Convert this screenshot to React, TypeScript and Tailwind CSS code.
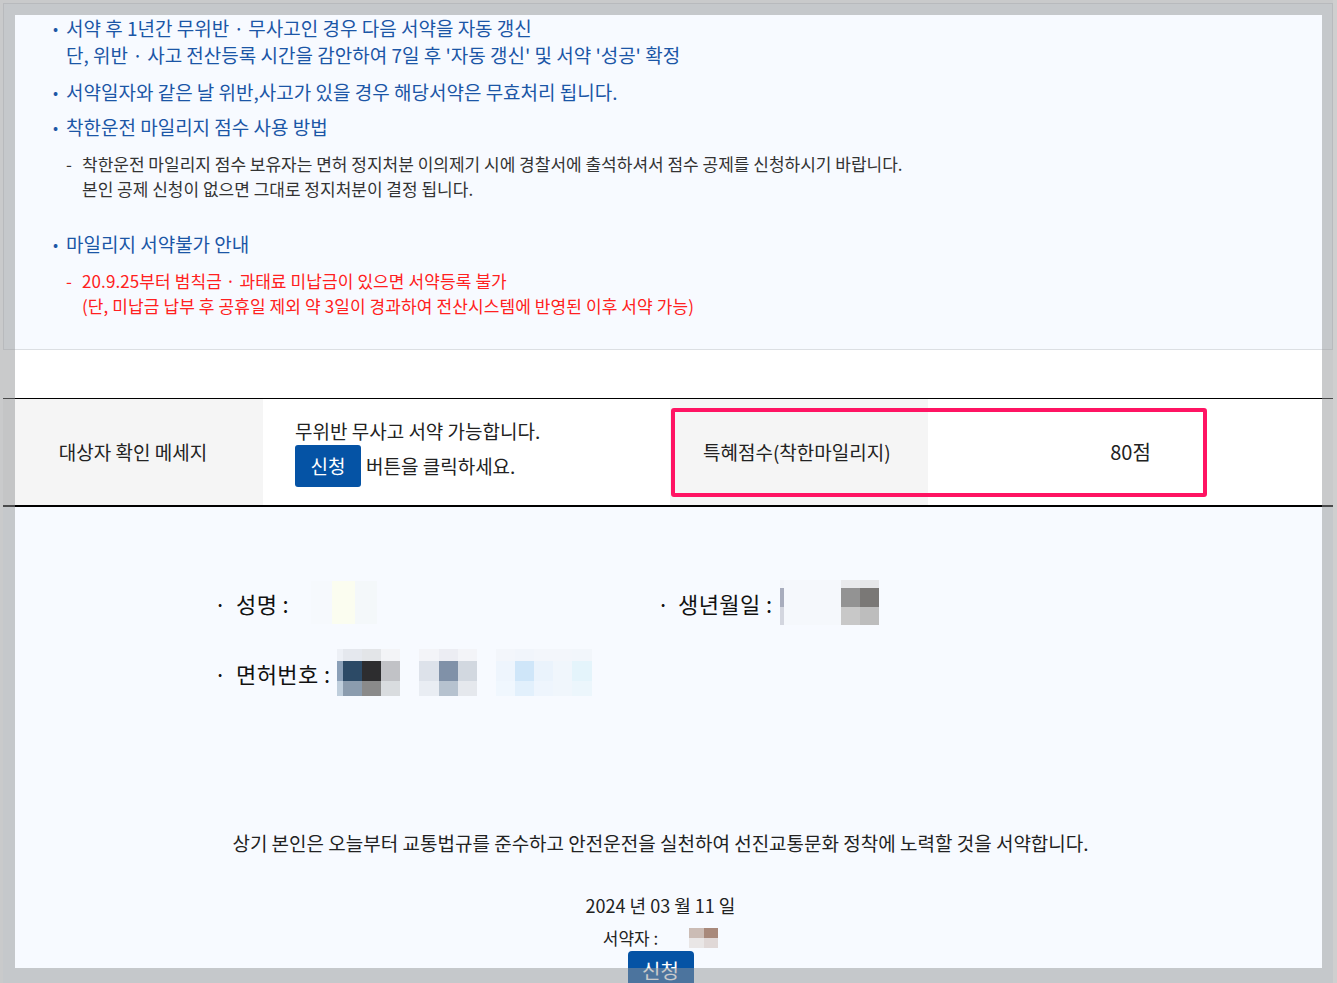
import React from "react";

const font = { fontFamily: '"Noto Sans CJK KR", "Noto Sans", sans-serif' };

type Tile = { w: number; c: string[] };

// blurred (pixelated) personal data
function Mosaic({ cols, rows }: { cols: Tile[]; rows: number[] }) {
  return (
    <div className="flex">
      {cols.map((col, i) => (
        <div key={i} className="flex flex-col" style={{ width: col.w }}>
          {rows.map((h, j) => (
            <div key={j} style={{ height: h, background: col.c[j] }} />
          ))}
        </div>
      ))}
    </div>
  );
}

function Bullet({ children, className = "" }: { children: React.ReactNode; className?: string }) {
  return (
    <div className={"flex " + className}>
      <span className="w-[13px] shrink-0 text-[15px]">•</span>
      <div>{children}</div>
    </div>
  );
}

export default function App() {
  return (
    <div
      className="relative h-[983px] w-[1337px] overflow-hidden bg-white text-[#222]"
      style={font}
    >
      {/* notice box */}
      <div className="ml-[3px] mr-[4px] mt-[3px] border border-[#dcdfe3] bg-[#f7faff] pb-[31px] pl-[49px] pt-[10px]">
        <div className="text-[19px] leading-[27px] text-[#1b56a6]">
          <Bullet>
            <div>서약 후 1년간 무위반 · 무사고인 경우 다음 서약을 자동 갱신</div>
            <div>단, 위반 · 사고 전산등록 시간을 감안하여 7일 후 '자동 갱신' 및 서약 '성공' 확정</div>
          </Bullet>
          <Bullet className="mt-[10px]">서약일자와 같은 날 위반,사고가 있을 경우 해당서약은 무효처리 됩니다.</Bullet>
          <Bullet className="mt-[8px]">착한운전 마일리지 점수 사용 방법</Bullet>
        </div>
        <div className="mt-[11px] flex pl-[13px] text-[17px] leading-[25px] text-[#333]">
          <span className="w-[16px] shrink-0">-</span>
          <div>
            <div>착한운전 마일리지 점수 보유자는 면허 정지처분 이의제기 시에 경찰서에 출석하셔서 점수 공제를 신청하시기 바랍니다.</div>
            <div>본인 공제 신청이 없으면 그대로 정지처분이 결정 됩니다.</div>
          </div>
        </div>
        <div className="mt-[29px] text-[19px] leading-[27px] text-[#1b56a6]">
          <Bullet>마일리지 서약불가 안내</Bullet>
        </div>
        <div className="mt-[11px] flex pl-[13px] text-[17px] leading-[25px] tracking-[0.1px] text-[#ff2020]">
          <span className="w-[16px] shrink-0">-</span>
          <div>
            <div>20.9.25부터 범칙금 · 과태료 미납금이 있으면 서약등록 불가</div>
            <div>(단, 미납금 납부 후 공휴일 제외 약 3일이 경과하여 전산시스템에 반영된 이후 서약 가능)</div>
          </div>
        </div>
      </div>

      {/* check table */}
      <div className="relative ml-[3px] mr-[4px] mt-[48px] flex h-[109px] border-b-2 border-t border-black">
        <div className="flex w-[260px] items-center justify-center bg-[#f5f5f5] text-[19px]">
          대상자 확인 메세지
        </div>
        <div className="flex w-[407px] flex-col justify-center pl-[32px] text-[19px] leading-[26px]">
          <div>무위반 무사고 서약 가능합니다.</div>
          <div className="mt-[1px] flex items-center">
            <span className="flex h-[42px] w-[66px] items-center justify-center rounded-[3px] bg-[#0553a5] text-white">
              신청
            </span>
            <span className="ml-[5px]">버튼을 클릭하세요.</span>
          </div>
        </div>
        <div className="flex w-[258px] items-center bg-[#f5f5f5] pl-[33px] text-[19px]">
          특혜점수(착한마일리지)
        </div>
        <div className="flex flex-1 items-center justify-center text-[20px]">80점</div>
        <div className="pointer-events-none absolute left-[668px] top-[9px] h-[89px] w-[536px] rounded-[3px] border-[4px] border-[#ff1463]" />
      </div>

      {/* applicant */}
      <div className="ml-[3px] mr-[4px] h-[480px] bg-[#f7faff]">
        <div className="flex pt-[73px] text-[22px] leading-[30px] tracking-[0.4px] text-[#111]">
          <div className="ml-[211px] w-[443px]">
            <div className="flex h-[45px] items-center">
              <span className="w-[22px]">·</span>
              <span>성명 :</span>
              <div className="ml-[22px]">
                <Mosaic
                  rows={[43]}
                  cols={[
                    { w: 21, c: ["#f6f9fd"] },
                    { w: 23, c: ["#fbfdf0"] },
                    { w: 22, c: ["#f4f8fa"] },
                  ]}
                />
              </div>
            </div>
            <div className="mt-[24px] flex h-[47px] items-center">
              <span className="w-[22px]">·</span>
              <span>면허번호 :</span>
              <div className="ml-[7px] flex gap-[19px]">
                <Mosaic
                  rows={[12, 20, 15]}
                  cols={[
                    { w: 6, c: ["#edf0f6", "#8ba0b8", "#bfcedc"] },
                    { w: 19, c: ["#e5e8ee", "#2c4a66", "#8b9cae"] },
                    { w: 19, c: ["#e3e5e8", "#2d2d2f", "#8a8a8a"] },
                    { w: 19, c: ["#f3f4f7", "#c1c2c6", "#d9dcdf"] },
                  ]}
                />
                <Mosaic
                  rows={[12, 20, 15]}
                  cols={[
                    { w: 20, c: ["#f3f4f8", "#dde2ea", "#e9edf3"] },
                    { w: 19, c: ["#ecedf3", "#8091a8", "#b6c2cf"] },
                    { w: 19, c: ["#f3f4f8", "#d2d8e0", "#e5e8ed"] },
                  ]}
                />
                <Mosaic
                  rows={[12, 20, 15]}
                  cols={[
                    { w: 19, c: ["#f3f6fb", "#eef5fd", "#f0f7fe"] },
                    { w: 19, c: ["#f1f5fb", "#cfe6f9", "#e2f0fc"] },
                    { w: 19, c: ["#f3f6fb", "#eaf3fc", "#eef5fd"] },
                    { w: 19, c: ["#f3f6fb", "#f0f6fc", "#f0f6fc"] },
                    { w: 20, c: ["#f2f6fb", "#e4f4fb", "#ecf6fc"] },
                  ]}
                />
              </div>
            </div>
          </div>
          <div className="flex h-[45px] items-center">
            <span className="w-[21px]">·</span>
            <span>생년월일 :</span>
            <div className="ml-[8px] flex items-end">
              <Mosaic
                rows={[8, 19, 18]}
                cols={[
                  { w: 4, c: ["#f3f6fa", "#a8adbd", "#d3d6df"] },
                  { w: 57, c: ["#f5f8fc", "#f5f8fc", "#f5f8fc"] },
                  { w: 19, c: ["#e9eaec", "#939393", "#c8c8c8"] },
                  { w: 19, c: ["#e6e7e9", "#7a7876", "#bdbdbd"] },
                ]}
              />
            </div>
          </div>
        </div>

        <div className="mr-[15px] flex flex-col items-center text-[#222]">
          <div className="mt-[134px] text-[19px] leading-[26px]">
            상기 본인은 오늘부터 교통법규를 준수하고 안전운전을 실천하여 선진교통문화 정착에 노력할 것을 서약합니다.
          </div>
          <div className="mt-[36px] text-[18px] leading-[26px]">2024 년 03 월 11 일</div>
          <div className="mt-[7px] flex h-[26px] items-center text-[17px]">
            <span>서약자 :</span>
            <div className="ml-[31px]">
              <Mosaic
                rows={[10, 10]}
                cols={[
                  { w: 15, c: ["#cbbcb5", "#e9e6e6"] },
                  { w: 14, c: ["#a8897b", "#e0d8d7"] },
                ]}
              />
            </div>
          </div>
          <div className="flex h-[40px] w-[66px] items-center justify-center rounded-[4px] bg-[#0553a5] text-[20px] text-white">
            신청
          </div>
        </div>
      </div>

      {/* dim frame */}
      <div className="pointer-events-none absolute inset-0 border-[15px] border-[#93959780]" />
      <div className="pointer-events-none absolute inset-y-0 right-0 w-[4px] bg-[#cfcfcf]" />
    </div>
  );
}
